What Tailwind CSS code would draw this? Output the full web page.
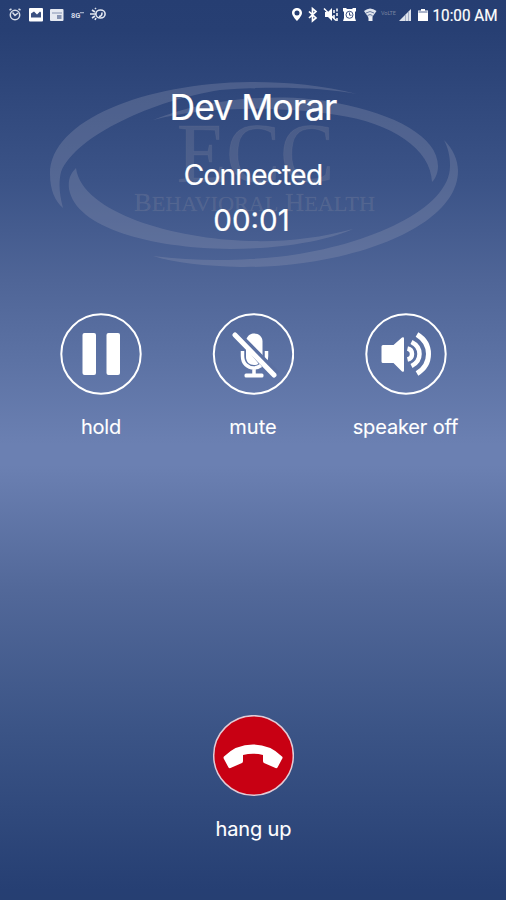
<!DOCTYPE html>
<html lang="en">
<head>
<meta charset="utf-8">
<title>Call</title>
<script src="https://cdn.jsdelivr.net/npm/@tailwindcss/browser@4"></script>
</head>
<body class="w-[506px] h-[900px] overflow-hidden">
<main class="relative w-[506px] h-[900px] flex flex-col text-white font-['Inter','Liberation_Sans',sans-serif] bg-[linear-gradient(to_bottom,#263e72_0,#273f73_30px,#3b5387_180px,#4f6597_280px,#5c72a4_360px,#6b80b2_445px,#6b80b2_465px,#526899_590px,#3b5486_730px,#263f73_890px,#263f72_900px)]">
  <!-- Watermark logo behind the caller details -->
  <svg class="absolute left-0 top-0" width="506" height="300" viewBox="0 0 506 300" aria-hidden="true">
    <g fill="#9298b2" fill-opacity=".3">
      <path d="M357 94C322 85 285 82 250 82C145 83 50 120 50 174C50 190 55 201 63 208C60 196 58 185 61 172C76 135 155 100 220 90C270 86 320 87 357 94Z"/>
      <path d="M153 120C205 99 280 91 337 103C395 114 438 137 438 166C438 172 436 178 432 182C431 149 392 123 337 115C280 106 205 106 153 120Z"/>
      <path d="M76 168C70 174 68 180 69 189C76 228 150 248 230 249C275 249 325 242 353 229C320 238 285 242 250 241C175 239 82 213 76 168Z"/>
      <path d="M444 140C453 149 458 160 458 171C458 227 350 268 240 267C205 266 175 263 153 256C185 260 220 261 250 259C345 255 450 215 450 166C450 156 448 148 444 140Z"/>
    </g>
    <g fill="#7f86a0" fill-opacity=".3" stroke="#7f86a0" stroke-opacity=".15" font-family="'Liberation Serif',serif">
      <text x="177" y="182" font-size="84" textLength="157" lengthAdjust="spacingAndGlyphs">ECC</text>
      <text x="134" y="211" font-size="25" stroke-width=".5" textLength="241" lengthAdjust="spacingAndGlyphs">B<tspan font-size="21">EHAVIORAL</tspan> H<tspan font-size="21">EALTH</tspan></text>
    </g>
  </svg>

  <header class="relative h-[30px] shrink-0">
    <svg width="506" height="30" viewBox="0 0 506 30">
      <g fill="none" stroke="#d5dbe8" stroke-width="1.5">
        <circle cx="15" cy="15" r="4.700"/><path d="M9.500 10l2-1M20.500 10l-2-1M12.500 12.500l2.500 3 3-2.500"/>
      </g>
      <rect x="29" y="8" width="14" height="13.500" rx="1" fill="#fff"/><path d="M31 17.500v-4l3-2 3 3 3-3 1 1v5z" fill="#3b5080"/>
      <rect x="50" y="9" width="13.500" height="12" rx="1" fill="#e5e9f1"/><path d="M52 12.500h10v1h-10zM57 15h4.500v4h-4.500z" fill="#8492b1"/>
      <text x="71" y="18" font-family="Roboto,sans-serif" font-size="7.500" font-weight="700" fill="#d4d9e6">8G</text><path d="M80 12h4v1.300h-4z" fill="#9ba8c3"/>
      <g fill="none" stroke="#e3e7f0" stroke-width="1.600"><ellipse cx="100.500" cy="14" rx="4.600" ry="4"/><path d="M99 16.500c2 0 3-1 3-4M90 14h6M92 10l3 2M92 18l3-2M96 9l-1-1M96 18l-1 2"/></g>
      <path fill="#fff" fill-rule="evenodd" d="M297 8c-3 0-5 2.200-5 5 0 3 5 8 5 8s5-5 5-8c0-2.800-2-5-5-5zm0 2.500a2.500 2.500 0 110 5 2.500 2.500 0 010-5z"/>
      <path d="M309 11.500l7 6.500-3.500 3V8.500l3.500 3-7 6.500" fill="none" stroke="#fff" stroke-width="1.700"/>
      <path fill="#fff" d="M325 12h3l4-4v13l-4-4h-3z"/><path d="M324 8.500l12 12M337 8.500v3M337 13v3M337 18v3M334 10v3M334 15v3" stroke="#fff" stroke-width="1.500"/>
      <path fill="#fff" d="M343 8h3l1 1h5l1-1h3v3l-1 1v6l1 3h-13l1-3v-6l-1-1z"/><circle cx="349.500" cy="14.800" r="3.500" fill="none" stroke="#3c5080" stroke-width="1"/><path d="M349.500 12.500v2.700h2" fill="none" stroke="#3c5080"/>
      <path d="M364 11q6-5 12.500 0l-6.300 9z" fill="#dfe4ed"/><path d="M366 13q4-3 8 0M367.500 15.500q2.500-2 5 0" fill="none" stroke="#4a5f8d" stroke-width=".8"/><path d="M368.500 17h4v4h-4z" fill="#eef0f6"/>
      <text x="381" y="15" font-size="5.500" font-family="Roboto,sans-serif" fill="#7883a0" textLength="15">VoLTE</text>
      <path d="M399 21h12V9z" fill="#dde2eb"/><path d="M405.500 14v7M408.500 11v10" stroke="#8795b4" stroke-width=".7"/>
      <path d="M418 10.500h3V9h4v1.500h3V21h-10z" fill="#fff"/><path d="M418.500 11h9v2h-9z" fill="#aab4ca"/>
      <text x="432.500" y="20.800" font-size="17" font-family="Roboto,sans-serif" fill="#fff" stroke="#fff" stroke-width=".2" textLength="65" lengthAdjust="spacingAndGlyphs">10:00 AM</text>
    </svg>
  </header>

  <section class="relative h-[283px] shrink-0 flex flex-col items-center pt-[55px] [-webkit-text-stroke:0.2px_white]">
    <h1 class="h-[46px] leading-[46px] text-[35.5px] tracking-[-0.95px] whitespace-nowrap">Dev Morar</h1>
    <p class="mt-[24px] h-[40px] leading-[40px] text-[28px] tracking-[-0.7px]">Connected</p>
    <p class="mt-[5px] mr-[3px] h-[40px] leading-[40px] text-[29.5px]">00:01</p>
  </section>

  <section class="grid grid-cols-[152px_152px_153px] ml-[25px] w-[457px] [-webkit-text-stroke:0.1px_white]">
    <div class="flex flex-col items-center">
      <svg width="82" height="83" viewBox="0 -1 82 83"><circle cx="41" cy="40" r="39.700" fill="none" stroke="#fff" stroke-width="2"/><rect x="22.500" y="19" width="13.500" height="42" rx="2" fill="#fff"/><rect x="46.500" y="19" width="13.500" height="42" rx="2" fill="#fff"/></svg>
      <span class="mt-[17px] leading-[28px] text-[20px] tracking-[-0.2px]">hold</span>
    </div>
    <div class="flex flex-col items-center">
      <svg width="82" height="83" viewBox="0 -1 82 83">
        <circle cx="41.500" cy="40" r="39.700" fill="none" stroke="#fff" stroke-width="2"/>
        <path d="M34 25.500C36 21 39 19.500 42 19.500c5 0 8.500 3.500 8.500 8V44L34 28z" fill="#fff"/>
        <path d="M34 34v9c0 5 3.500 8 8 8 2 0 3.500-.5 4.500-1.500z" fill="#fff"/>
        <path d="M30.500 37v5c0 7.500 5 12 11.500 12 3 0 5-1 7-2.500M54.500 37v5c0 2-.3 3.500-1 5M42 54v7" fill="none" stroke="#fff" stroke-width="3.500"/>
        <rect x="32.500" y="59.500" width="19" height="4" rx="1.500" fill="#fff"/>
        <path d="M27 20L66 59.500" stroke="#5b70a2" stroke-width="4"/><path d="M23 21L62 61" stroke="#fff" stroke-width="5" stroke-linecap="round"/>
      </svg>
      <span class="mt-[17px] leading-[28px] text-[20px]">mute</span>
    </div>
    <div class="flex flex-col items-center">
      <svg width="82" height="83" viewBox="0 -1 82 83"><circle cx="41" cy="40" r="39.700" fill="none" stroke="#fff" stroke-width="2"/>
        <path d="M18 31h10.500L37 23.500q2-1 2 1v32q0 2-2 1L28.500 49H18q-1.500 0-1.500-1.500v-15Q16.500 31 18 31z" fill="#fff"/>
        <path d="M42.500 34.500q4.500 1 4.500 5.500t-4.500 5.500" fill="none" stroke="#fff" stroke-width="4.500"/>
        <path d="M46.500 28q8 4 8 12t-8 12" fill="none" stroke="#fff" stroke-width="4.500"/>
        <path d="M52 20.500q11.500 7 11.500 19.500t-11.500 19.500" fill="none" stroke="#fff" stroke-width="5"/>
      </svg>
      <span class="mt-[17px] leading-[28px] text-[20px] tracking-[-0.15px] whitespace-nowrap">speaker off</span>
    </div>
  </section>

  <section class="mt-auto mb-[57px] flex flex-col items-center [-webkit-text-stroke:0.1px_white]">
    <svg width="82" height="82" viewBox="0 0 82 82"><circle cx="41.500" cy="40.500" r="39.800" fill="#c80013" stroke="#e1cbd6" stroke-width="1.500"/>
      <path d="M12 41.500Q24 29.500 41 29.500T70 41.500q1 1 .3 2l-4.800 9q-.7 1-2 .5L52 48q-1-.5-1-2v-6q-10-2.500-20 0v6q0 1.500-1 2l-11.500 5q-1.300.5-2-.5l-4.800-9q-.5-1 .3-2z" fill="#fff"/>
    </svg>
    <span class="mt-[18px] leading-[28px] text-[20px] tracking-[-0.15px] ml-[1px]">hang up</span>
  </section>
</main>
</body>
</html>
